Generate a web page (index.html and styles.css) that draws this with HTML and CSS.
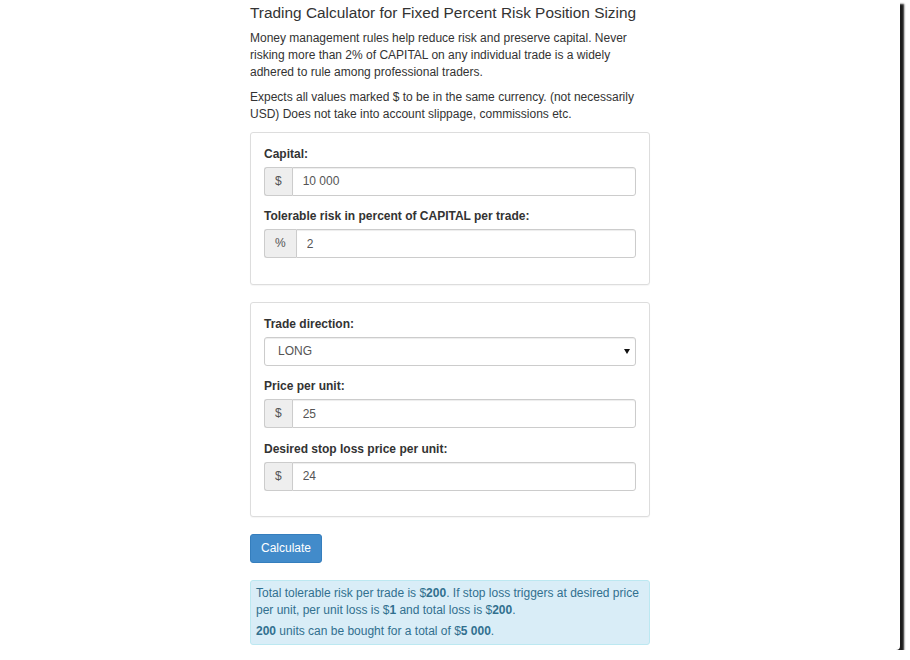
FILE: index.html
```html
<!DOCTYPE html>
<html>
<head>
<meta charset="utf-8">
<title>Trading Calculator</title>
<link rel="stylesheet" href="styles.css">
</head>
<body>
<div class="frame">
  <div class="content">
    <h4 class="title">Trading Calculator for Fixed Percent Risk Position Sizing</h4>
    <p class="text">Money management rules help reduce risk and preserve capital. Never risking more than 2% of CAPITAL on any individual trade is a widely adhered to rule among professional traders.</p>
    <p class="text">Expects all values marked $ to be in the same currency. (not necessarily USD) Does not take into account slippage, commissions etc.</p>

    <div class="panel">
      <div class="form-group">
        <label class="label">Capital:</label>
        <div class="input-group">
          <span class="addon">$</span>
          <input class="control" type="text" value="10 000">
        </div>
      </div>
      <div class="form-group">
        <label class="label">Tolerable risk in percent of CAPITAL per trade:</label>
        <div class="input-group">
          <span class="addon">%</span>
          <input class="control" type="text" value="2">
        </div>
      </div>
    </div>

    <div class="panel">
      <div class="form-group">
        <label class="label">Trade direction:</label>
        <div class="select-wrap">
          <select class="select">
            <option>LONG</option>
            <option>SHORT</option>
          </select>
        </div>
      </div>
      <div class="form-group">
        <label class="label">Price per unit:</label>
        <div class="input-group">
          <span class="addon">$</span>
          <input class="control" type="text" value="25">
        </div>
      </div>
      <div class="form-group">
        <label class="label">Desired stop loss price per unit:</label>
        <div class="input-group">
          <span class="addon">$</span>
          <input class="control" type="text" value="24">
        </div>
      </div>
    </div>

    <button class="btn" type="button">Calculate</button>

    <div class="alert">
      <p class="alert-p">Total tolerable risk per trade is $<b>200</b>. If stop loss triggers at desired price per unit, per unit loss is $<b>1</b> and total loss is $<b>200</b>.</p>
      <p class="alert-p"><b>200</b> units can be bought for a total of $<b>5 000</b>.</p>
    </div>
  </div>
</div>
</body>
</html>
```

FILE: styles.css
```css
* { box-sizing: border-box; }

html, body {
  margin: 0;
  padding: 0;
  background: #ffffff;
}

body {
  font-family: "Liberation Sans", Arial, sans-serif;
  font-size: 12px;
  line-height: 17px;
  color: #333333;
}

.frame {
  width: 900px;
  height: 650px;
  background: #ffffff;
  overflow: hidden;
  border-bottom-right-radius: 4px;
  box-shadow: 4px 4px 2px #1c1c1c;
}

.content {
  width: 400px;
  margin: 0 auto;
  padding-top: 4px;
}

.title {
  font-size: 15.4px;
  font-weight: normal;
  line-height: 17px;
  margin: 0 0 8.5px;
  color: #333333;
  white-space: nowrap;
}

.text {
  margin: 0 0 8.5px;
}

.panel {
  border: 1px solid #dddddd;
  border-radius: 3px;
  padding: 13px;
  margin-bottom: 17px;
  background: #ffffff;
  box-shadow: 0 1px 1px rgba(0,0,0,0.04);
}

.form-group {
  margin-bottom: 12.5px;
}

.label {
  display: block;
  font-weight: bold;
  line-height: 17px;
  margin-bottom: 4px;
}

.input-group {
  display: flex;
  height: 29px;
}

.addon {
  display: flex;
  align-items: center;
  justify-content: center;
  padding: 0 10px;
  background: #eeeeee;
  border: 1px solid #cccccc;
  border-right: 0;
  border-radius: 3px 0 0 3px;
  color: #555555;
  font-size: 12px;
}

.control {
  flex: 1;
  min-width: 0;
  height: 29px;
  margin: 0;
  padding: 0 10px;
  border: 1px solid #cccccc;
  border-radius: 0 3px 3px 0;
  box-shadow: inset 0 1px 1px rgba(0,0,0,0.075);
  font-family: "Liberation Sans", Arial, sans-serif;
  font-size: 12px;
  color: #555555;
  background: #ffffff;
  outline: none;
}

.select-wrap {
  position: relative;
}

.select-wrap::after {
  content: "";
  position: absolute;
  right: 6px;
  top: 12px;
  border-left: 3px solid transparent;
  border-right: 3px solid transparent;
  border-top: 5px solid #111111;
}

.select {
  display: block;
  width: 100%;
  height: 29px;
  margin: 0;
  padding: 0 20px 0 13px;
  border: 1px solid #cccccc;
  border-radius: 3px;
  box-shadow: inset 0 1px 1px rgba(0,0,0,0.075);
  background: #ffffff;
  -webkit-appearance: none;
  appearance: none;
  font-family: "Liberation Sans", Arial, sans-serif;
  font-size: 12px;
  color: #555555;
  outline: none;
}

.btn {
  display: block;
  height: 29px;
  margin: 0 0 17px;
  padding: 0 10px;
  background: #428bca;
  border: 1px solid #357ebd;
  border-radius: 3px;
  color: #ffffff;
  font-family: "Liberation Sans", Arial, sans-serif;
  font-size: 12px;
  line-height: 17px;
  cursor: pointer;
}

.alert {
  background: #d9edf7;
  border: 1px solid #bce8f1;
  border-radius: 3px;
  padding: 4px 5px;
  color: #31708f;
}

.alert-p {
  margin: 0;
}

.alert-p + .alert-p {
  margin-top: 4px;
}
```
